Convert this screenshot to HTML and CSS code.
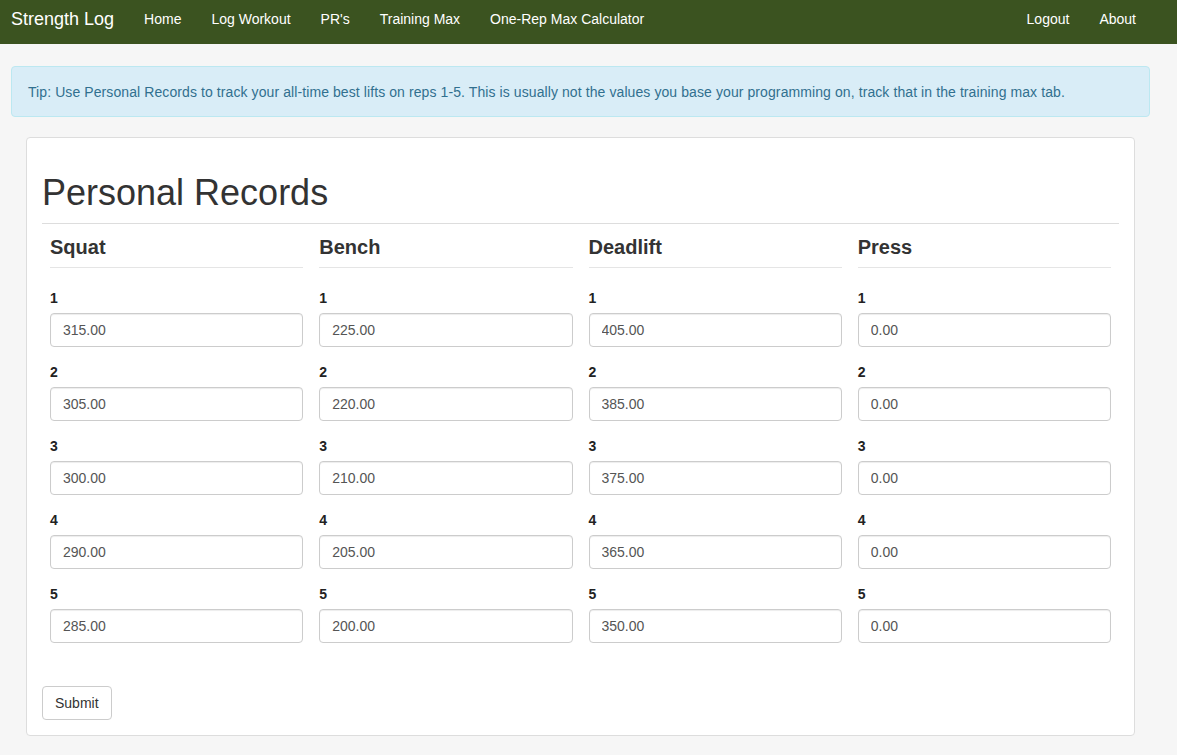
FILE: index.html
```html
<!DOCTYPE html>
<html>
<head>
<meta charset="utf-8">
<link rel="stylesheet" href="styles.css">
</head>
<body>
<nav class="navbar">
  <a class="brand" href="#">Strength Log</a>
  <ul class="nav">
    <li><a href="#">Home</a></li>
    <li><a href="#">Log Workout</a></li>
    <li><a href="#">PR's</a></li>
    <li><a href="#">Training Max</a></li>
    <li><a href="#">One-Rep Max Calculator</a></li>
  </ul>
  <ul class="nav nav-right">
    <li><a href="#">Logout</a></li>
    <li><a href="#">About</a></li>
  </ul>
</nav>
<div class="alert">Tip: Use Personal Records to track your all-time best lifts on reps 1-5. This is usually not the values you base your programming on, track that in the training max tab.</div>
<div class="panel">
  <h1 class="page-title">Personal Records</h1>
  <form class="records">
    <div class="cols">
      <div class="col">
        <h3 class="lift">Squat</h3>
        <div class="group"><label>1</label><input class="field" value="315.00"></div>
        <div class="group"><label>2</label><input class="field" value="305.00"></div>
        <div class="group"><label>3</label><input class="field" value="300.00"></div>
        <div class="group"><label>4</label><input class="field" value="290.00"></div>
        <div class="group"><label>5</label><input class="field" value="285.00"></div>
      </div>
      <div class="col">
        <h3 class="lift">Bench</h3>
        <div class="group"><label>1</label><input class="field" value="225.00"></div>
        <div class="group"><label>2</label><input class="field" value="220.00"></div>
        <div class="group"><label>3</label><input class="field" value="210.00"></div>
        <div class="group"><label>4</label><input class="field" value="205.00"></div>
        <div class="group"><label>5</label><input class="field" value="200.00"></div>
      </div>
      <div class="col">
        <h3 class="lift">Deadlift</h3>
        <div class="group"><label>1</label><input class="field" value="405.00"></div>
        <div class="group"><label>2</label><input class="field" value="385.00"></div>
        <div class="group"><label>3</label><input class="field" value="375.00"></div>
        <div class="group"><label>4</label><input class="field" value="365.00"></div>
        <div class="group"><label>5</label><input class="field" value="350.00"></div>
      </div>
      <div class="col">
        <h3 class="lift">Press</h3>
        <div class="group"><label>1</label><input class="field" value="0.00"></div>
        <div class="group"><label>2</label><input class="field" value="0.00"></div>
        <div class="group"><label>3</label><input class="field" value="0.00"></div>
        <div class="group"><label>4</label><input class="field" value="0.00"></div>
        <div class="group"><label>5</label><input class="field" value="0.00"></div>
      </div>
    </div>
    <button type="button" class="btn">Submit</button>
  </form>
</div>
</body>
</html>
```
FILE: styles.css
```css
* { box-sizing: border-box; }
html, body { margin: 0; padding: 0; }
body {
  background: #f6f6f6;
  font-family: "Liberation Sans", Arial, sans-serif;
  font-size: 14px;
  line-height: 20px;
  color: #333;
}
.navbar {
  height: 44px;
  background: #3b5320;
  display: flex;
  align-items: stretch;
  padding: 0 26px 0 11px;
}
.brand {
  color: #fff;
  text-decoration: none;
  font-size: 18px;
  line-height: 20px;
  padding: 9px 15px 0 0;
}
.nav {
  list-style: none;
  margin: 0;
  padding: 0;
  display: flex;
}
.nav a {
  display: block;
  color: #fff;
  text-decoration: none;
  padding: 9px 15px 0;
  line-height: 20px;
}
.nav-right { margin-left: auto; }
.alert {
  margin: 22px 27px 20px 11px;
  padding: 15px 16px 14px;
  background: #d9edf7;
  border: 1px solid #bce8f1;
  border-radius: 4px;
  color: #31708f;
  letter-spacing: 0.09px;
}
.panel {
  margin: 0 42px 20px 26px;
  background: #fff;
  border: 1px solid #ddd;
  border-radius: 4px;
  padding: 15px;
}
.page-title {
  margin: 20px 0 0;
  font-size: 36px;
  font-weight: 400;
  line-height: 1.1;
  padding-bottom: 10px;
  border-bottom: 1px solid #ddd;
}
.cols {
  display: grid;
  grid-template-columns: repeat(4, 1fr);
}
.col { padding: 0 8px; }
.lift {
  margin: 12px 0 20px;
  font-size: 20px;
  font-weight: 700;
  line-height: 22px;
  padding-bottom: 9px;
  border-bottom: 1px solid #e5e5e5;
}
.group { margin-bottom: 15px; }
.group label {
  display: block;
  font-weight: 700;
  margin-bottom: 5px;
  color: #222;
}
.field {
  display: block;
  width: 100%;
  height: 34px;
  padding: 6px 12px;
  font-family: inherit;
  font-size: 14px;
  color: #555;
  background: #fff;
  border: 1px solid #ccc;
  border-radius: 4px;
  box-shadow: inset 0 1px 1px rgba(0,0,0,.075);
}
.btn {
  margin-top: 28px;
  height: 34px;
  padding: 6px 12px;
  font-family: inherit;
  font-size: 14px;
  color: #333;
  background: #fff;
  border: 1px solid #ccc;
  border-radius: 4px;
}
```
